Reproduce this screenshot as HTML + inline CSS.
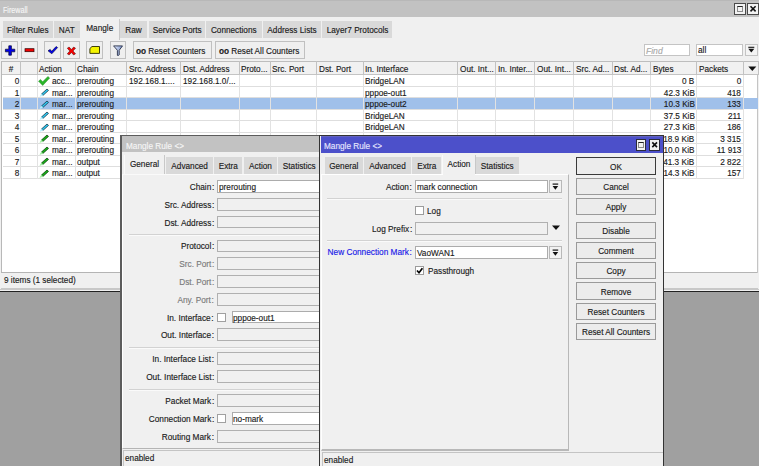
<!DOCTYPE html><html><head><meta charset="utf-8"><style>

*{box-sizing:border-box}
body{margin:0;width:759px;height:466px;overflow:hidden;background:#a0a0a0;position:relative;font-family:"Liberation Sans",sans-serif;font-size:9.5px;color:#1a1a1a}
.abs{position:absolute}
.t{position:absolute;white-space:nowrap;line-height:12px;height:12px;transform:scaleX(0.865);margin-top:0.9px;-webkit-text-stroke:0.15px currentColor}
.btn{position:absolute;border:1px solid #adadad;background:#ececec}
.fld{position:absolute;border:1px solid #acacac;background:#fff}
.dis{position:absolute;border:1px solid #b0b0b0;background:#f0f0f0}

</style></head><body>
<div class="abs" style="left:0px;top:0px;width:759px;height:292px;background:#f0f0f0"></div>
<div class="abs" style="left:0px;top:291px;width:759px;height:1px;background:#222"></div>
<div class="abs" style="left:0px;top:289px;width:759px;height:1px;background:#c8c8c8"></div>
<div class="abs" style="left:0px;top:0px;width:759px;height:17px;background:#c2c2c2"></div>
<div class="abs" style="left:0px;top:0px;width:759px;height:1px;background:#b8b8b8"></div>
<div class="t" style="left:3px;top:3.5px;transform-origin:0 50%;color:#f6f6f6;transform:scaleX(0.75)">Firewall</div>
<div class="abs" style="left:734.1px;top:3.1px;width:11.699999999999932px;height:11.6px;border:1px solid #4a4a4a;background:#f2f2f2"></div>
<div class="abs" style="left:747.2px;top:3.1px;width:11.799999999999955px;height:11.6px;border:1px solid #4a4a4a;background:#f2f2f2"></div>
<div class="abs" style="left:737px;top:5.8px;width:6.2999999999999545px;height:6.2px;border:1px solid #8a8a8a;border-top:1.6px solid #222"></div>
<svg class="abs" style="left:747.2px;top:3.1px" width="12" height="12"><path d="M3.5 3.3L8.6 8.4M8.6 3.3L3.5 8.4" stroke="#111" stroke-width="1.6"/></svg>
<div class="abs" style="left:3px;top:21.3px;width:49.5px;height:16.499999999999996px;background:#d9d9d9"></div>
<div class="t" style="left:3px;width:49.5px;top:22.8px;text-align:center;transform-origin:50% 50%;">Filter Rules</div>
<div class="abs" style="left:54px;top:21.3px;width:25.5px;height:16.499999999999996px;background:#d9d9d9"></div>
<div class="t" style="left:54px;width:25.5px;top:22.8px;text-align:center;transform-origin:50% 50%;">NAT</div>
<div class="abs" style="left:120px;top:21.3px;width:27px;height:16.499999999999996px;background:#d9d9d9"></div>
<div class="t" style="left:120px;width:27px;top:22.8px;text-align:center;transform-origin:50% 50%;">Raw</div>
<div class="abs" style="left:148.5px;top:21.3px;width:56.5px;height:16.499999999999996px;background:#d9d9d9"></div>
<div class="t" style="left:148.5px;width:56.5px;top:22.8px;text-align:center;transform-origin:50% 50%;">Service Ports</div>
<div class="abs" style="left:206px;top:21.3px;width:55.5px;height:16.499999999999996px;background:#d9d9d9"></div>
<div class="t" style="left:206px;width:55.5px;top:22.8px;text-align:center;transform-origin:50% 50%;">Connections</div>
<div class="abs" style="left:262.5px;top:21.3px;width:58.0px;height:16.499999999999996px;background:#d9d9d9"></div>
<div class="t" style="left:262.5px;width:58.0px;top:22.8px;text-align:center;transform-origin:50% 50%;">Address Lists</div>
<div class="abs" style="left:321.5px;top:21.3px;width:70.0px;height:16.499999999999996px;background:#d9d9d9"></div>
<div class="t" style="left:321.5px;width:70.0px;top:22.8px;text-align:center;transform-origin:50% 50%;">Layer7 Protocols</div>
<div class="abs" style="left:80px;top:19px;width:40px;height:21px;background:#f0f0f0;border-right:1px solid #c8c8c8"></div>
<div class="t" style="left:80px;width:39.5px;top:21.6px;text-align:center;transform-origin:50% 50%;">Mangle</div>
<div class="abs" style="left:1.3px;top:41.2px;width:17.099999999999998px;height:17.799999999999997px;border:1px solid #c0c0c0;background:#efefef"></div>
<div class="abs" style="left:20.9px;top:41.2px;width:16.700000000000003px;height:17.799999999999997px;border:1px solid #c0c0c0;background:#efefef"></div>
<div class="abs" style="left:44px;top:41.2px;width:16.9px;height:17.799999999999997px;border:1px solid #c0c0c0;background:#efefef"></div>
<div class="abs" style="left:63.2px;top:41.2px;width:16.39999999999999px;height:17.799999999999997px;border:1px solid #c0c0c0;background:#efefef"></div>
<div class="abs" style="left:86.3px;top:41.2px;width:17.200000000000003px;height:17.799999999999997px;border:1px solid #c0c0c0;background:#efefef"></div>
<div class="abs" style="left:109.7px;top:41.2px;width:16.599999999999994px;height:17.799999999999997px;border:1px solid #c0c0c0;background:#efefef"></div>
<div class="abs" style="left:133px;top:41.2px;width:78.80000000000001px;height:17.799999999999997px;border:1px solid #c0c0c0;background:#efefef"></div>
<div class="abs" style="left:215.1px;top:41.2px;width:89.9px;height:17.799999999999997px;border:1px solid #c0c0c0;background:#efefef"></div>
<svg class="abs" style="left:0;top:38px" width="130" height="24" viewBox="0 38 130 24">
<path d="M8.8 45.8h2.6v3.4h3.4v2.6h-3.4v3.4h-2.6v-3.4h-3.4v-2.6h3.4z" fill="#0000e8" stroke="#000030" stroke-width="0.7"/>
<rect x="25" y="48.7" width="9" height="3" fill="#f00000" stroke="#300000" stroke-width="0.7"/>
<path d="M48 50.8l2.2-1.4l1.5 1.9l4.4-4.8l1.5 1.1l-5.8 6.2z" fill="#0000f0" stroke="#000030" stroke-width="0.6"/>
<path d="M67.3 48.2l1.8-1.2l2.3 2.5l2.3-2.5l1.8 1.2l-2.5 2.8l2.5 2.8l-1.8 1.2l-2.3-2.5l-2.3 2.5l-1.8-1.2l2.5-2.8z" fill="#f80000" stroke="#400000" stroke-width="0.5"/>
<path d="M89.9 53.4v-4.9l2.1-2h7.5v6.9z" fill="#f4f400" stroke="#2a2a00" stroke-width="0.9" stroke-linejoin="round"/>
<defs><linearGradient id="fg" x1="0" y1="0" x2="1" y2="0"><stop offset="0" stop-color="#e8f0ff"/><stop offset="1" stop-color="#7890c8"/></linearGradient></defs><path d="M113.6 45.9h8.9l-3.3 4.4v4.6q-0.6 0.8-1.8 0.5v-5.1z" fill="url(#fg)" stroke="#283048" stroke-width="0.9" stroke-linejoin="round"/>
</svg>
<div class="t" style="left:136px;top:44px;transform-origin:0 50%;"><b>oo</b> Reset Counters</div>
<div class="t" style="left:218.5px;top:44px;transform-origin:0 50%;"><b>oo</b> Reset All Counters</div>
<div class="abs" style="left:644px;top:43.8px;width:46px;height:12.600000000000001px;border:1px solid #c4c4c4;background:#fff"></div>
<div class="t" style="left:646.3px;top:44px;transform-origin:0 50%;color:#a8a8a8;font-style:italic;transform:scaleX(0.9)">Find</div>
<div class="abs" style="left:695.6px;top:43.8px;width:47.39999999999998px;height:12.600000000000001px;border:1px solid #c4c4c4;background:#fff"></div>
<div class="t" style="left:697.5px;top:43.5px;transform-origin:0 50%;">all</div>
<div class="abs" style="left:744.8px;top:43.8px;width:13.200000000000045px;height:12.600000000000001px;border:1px solid #c4c4c4;background:#f4f4f4"></div>
<svg class="abs" style="left:745px;top:44px" width="13" height="12"><path d="M3.3 3.3h6" stroke="#111" stroke-width="1.1"/><path d="M3.3 4.8h6l-3 3.6z" fill="#111"/></svg>
<div class="abs" style="left:1px;top:61px;width:757px;height:211.5px;background:#fff"></div>
<div class="abs" style="left:1.2px;top:61px;width:1.3px;height:211.5px;background:#b8b8b8"></div>
<div class="abs" style="left:1px;top:272px;width:757px;height:1px;background:#b4b4b4"></div>
<div class="abs" style="left:757.3px;top:61px;width:1.0px;height:212px;background:#c4c4c4"></div>
<div class="abs" style="left:2px;top:61px;width:756px;height:13.5px;background:#f1f1f1;border-top:1px solid #bdbdbd;border-bottom:1px solid #c4c4c4"></div>
<div class="abs" style="left:19.5px;top:61px;width:1.0px;height:13.5px;background:#c2c2c2"></div>
<div class="t" style="left:2px;width:18px;top:62px;text-align:center;transform-origin:50% 50%;">#</div>
<div class="abs" style="left:36.5px;top:61px;width:1.0px;height:13.5px;background:#c2c2c2"></div>
<div class="abs" style="left:74.5px;top:61px;width:1.0px;height:13.5px;background:#c2c2c2"></div>
<div class="t" style="left:39px;top:62px;transform-origin:0 50%;">Action</div>
<div class="abs" style="left:126.0px;top:61px;width:1.0px;height:13.5px;background:#c2c2c2"></div>
<div class="t" style="left:77px;top:62px;transform-origin:0 50%;">Chain</div>
<div class="abs" style="left:180.0px;top:61px;width:1.0px;height:13.5px;background:#c2c2c2"></div>
<div class="t" style="left:128.5px;top:62px;transform-origin:0 50%;">Src. Address</div>
<div class="abs" style="left:238.5px;top:61px;width:1.0px;height:13.5px;background:#c2c2c2"></div>
<div class="t" style="left:182.5px;top:62px;transform-origin:0 50%;">Dst. Address</div>
<div class="abs" style="left:269.5px;top:61px;width:1.0px;height:13.5px;background:#c2c2c2"></div>
<div class="t" style="left:241px;top:62px;transform-origin:0 50%;">Proto...</div>
<div class="abs" style="left:316.0px;top:61px;width:1.0px;height:13.5px;background:#c2c2c2"></div>
<div class="t" style="left:272px;top:62px;transform-origin:0 50%;">Src. Port</div>
<div class="abs" style="left:362.5px;top:61px;width:1.0px;height:13.5px;background:#c2c2c2"></div>
<div class="t" style="left:318.5px;top:62px;transform-origin:0 50%;">Dst. Port</div>
<div class="abs" style="left:457.0px;top:61px;width:1.0px;height:13.5px;background:#c2c2c2"></div>
<div class="t" style="left:365px;top:62px;transform-origin:0 50%;">In. Interface</div>
<div class="abs" style="left:495.0px;top:61px;width:1.0px;height:13.5px;background:#c2c2c2"></div>
<div class="t" style="left:459.5px;top:62px;transform-origin:0 50%;">Out. Int...</div>
<div class="abs" style="left:534.0px;top:61px;width:1.0px;height:13.5px;background:#c2c2c2"></div>
<div class="t" style="left:497.5px;top:62px;transform-origin:0 50%;">In. Inter...</div>
<div class="abs" style="left:573.0px;top:61px;width:1.0px;height:13.5px;background:#c2c2c2"></div>
<div class="t" style="left:536.5px;top:62px;transform-origin:0 50%;">Out. Int...</div>
<div class="abs" style="left:611.5px;top:61px;width:1.0px;height:13.5px;background:#c2c2c2"></div>
<div class="t" style="left:575.5px;top:62px;transform-origin:0 50%;">Src. Ad...</div>
<div class="abs" style="left:650.0px;top:61px;width:1.0px;height:13.5px;background:#c2c2c2"></div>
<div class="t" style="left:614px;top:62px;transform-origin:0 50%;">Dst. Ad...</div>
<div class="abs" style="left:696.0px;top:61px;width:1.0px;height:13.5px;background:#c2c2c2"></div>
<div class="t" style="left:652.5px;top:62px;transform-origin:0 50%;">Bytes</div>
<div class="abs" style="left:743.0px;top:61px;width:1.0px;height:13.5px;background:#c2c2c2"></div>
<div class="t" style="left:698.5px;top:62px;transform-origin:0 50%;">Packets</div>
<div class="abs" style="left:757.5px;top:61px;width:1.0px;height:13.5px;background:#c2c2c2"></div>
<svg class="abs" style="left:744px;top:64px" width="14" height="10"><path d="M4.3 2.5h8l-4 4.5z" fill="#111"/></svg>
<div class="abs" style="left:2.5px;top:85.56px;width:741.0px;height:1.0px;background:#dedede"></div>
<div class="t" style="right:740.2px;top:74.1px;text-align:right;transform-origin:100% 50%;">0</div>
<div class="t" style="left:51.5px;top:74.1px;transform-origin:0 50%;">acc...</div>
<div class="t" style="left:77px;top:74.1px;transform-origin:0 50%;">prerouting</div>
<div class="t" style="left:128.5px;top:74.1px;transform-origin:0 50%;">192.168.1....</div>
<div class="t" style="left:182.5px;top:74.1px;transform-origin:0 50%;">192.168.1.0/...</div>
<div class="t" style="left:365px;top:74.1px;transform-origin:0 50%;">BridgeLAN</div>
<div class="t" style="right:64.5px;top:74.1px;text-align:right;transform-origin:100% 50%;">0 B</div>
<div class="t" style="right:18px;top:74.1px;text-align:right;transform-origin:100% 50%;">0</div>
<svg class="abs" style="left:38px;top:76.0px" width="12" height="10" viewBox="0 0 12 10"><path d="M0.5 5.2l2-1.8l2.2 2.3l5.2-5.3l1.8 1.7l-7 7.4z" fill="#2ab52a" stroke="#1a801a" stroke-width="0.4"/></svg>
<div class="abs" style="left:2.5px;top:97.12px;width:741.0px;height:1.0px;background:#dedede"></div>
<div class="t" style="right:740.2px;top:85.66px;text-align:right;transform-origin:100% 50%;">1</div>
<div class="t" style="left:51.5px;top:85.66px;transform-origin:0 50%;">mar...</div>
<div class="t" style="left:77px;top:85.66px;transform-origin:0 50%;">prerouting</div>
<div class="t" style="left:128.5px;top:85.66px;transform-origin:0 50%;"></div>
<div class="t" style="left:182.5px;top:85.66px;transform-origin:0 50%;"></div>
<div class="t" style="left:365px;top:85.66px;transform-origin:0 50%;">pppoe-out1</div>
<div class="t" style="right:64.5px;top:85.66px;text-align:right;transform-origin:100% 50%;">42.3 KiB</div>
<div class="t" style="right:18px;top:85.66px;text-align:right;transform-origin:100% 50%;">418</div>
<svg class="abs" style="left:38.5px;top:88.06px" width="11" height="9" viewBox="0 0 11 9"><path d="M2.4 6.1l5.6-5.1l1.5 1.4l-5.6 5.1z" fill="#30c8f0" stroke="#0a2030" stroke-width="0.7" stroke-linejoin="round"/><path d="M0.9 8.4l1.5-2.3l1.5 1.4z" fill="#b8f0ff" stroke="#b8f0ff" stroke-width="0.5"/></svg>
<div class="abs" style="left:2.5px;top:97.62px;width:755.5px;height:11.560000000000002px;background:#a0c0ea"></div>
<div class="abs" style="left:2.5px;top:108.68px;width:741.0px;height:1.0px;background:#dedede"></div>
<div class="t" style="right:740.2px;top:97.22px;text-align:right;transform-origin:100% 50%;">2</div>
<div class="t" style="left:51.5px;top:97.22px;transform-origin:0 50%;">mar...</div>
<div class="t" style="left:77px;top:97.22px;transform-origin:0 50%;">prerouting</div>
<div class="t" style="left:128.5px;top:97.22px;transform-origin:0 50%;"></div>
<div class="t" style="left:182.5px;top:97.22px;transform-origin:0 50%;"></div>
<div class="t" style="left:365px;top:97.22px;transform-origin:0 50%;">pppoe-out2</div>
<div class="t" style="right:64.5px;top:97.22px;text-align:right;transform-origin:100% 50%;">10.3 KiB</div>
<div class="t" style="right:18px;top:97.22px;text-align:right;transform-origin:100% 50%;">133</div>
<svg class="abs" style="left:38.5px;top:99.62px" width="11" height="9" viewBox="0 0 11 9"><path d="M2.4 6.1l5.6-5.1l1.5 1.4l-5.6 5.1z" fill="#30c8f0" stroke="#0a2030" stroke-width="0.7" stroke-linejoin="round"/><path d="M0.9 8.4l1.5-2.3l1.5 1.4z" fill="#b8f0ff" stroke="#b8f0ff" stroke-width="0.5"/></svg>
<div class="abs" style="left:2.5px;top:120.24000000000001px;width:741.0px;height:1.0px;background:#dedede"></div>
<div class="t" style="right:740.2px;top:108.78px;text-align:right;transform-origin:100% 50%;">3</div>
<div class="t" style="left:51.5px;top:108.78px;transform-origin:0 50%;">mar...</div>
<div class="t" style="left:77px;top:108.78px;transform-origin:0 50%;">prerouting</div>
<div class="t" style="left:128.5px;top:108.78px;transform-origin:0 50%;"></div>
<div class="t" style="left:182.5px;top:108.78px;transform-origin:0 50%;"></div>
<div class="t" style="left:365px;top:108.78px;transform-origin:0 50%;">BridgeLAN</div>
<div class="t" style="right:64.5px;top:108.78px;text-align:right;transform-origin:100% 50%;">37.5 KiB</div>
<div class="t" style="right:18px;top:108.78px;text-align:right;transform-origin:100% 50%;">211</div>
<svg class="abs" style="left:38.5px;top:111.18px" width="11" height="9" viewBox="0 0 11 9"><path d="M2.4 6.1l5.6-5.1l1.5 1.4l-5.6 5.1z" fill="#30c8f0" stroke="#0a2030" stroke-width="0.7" stroke-linejoin="round"/><path d="M0.9 8.4l1.5-2.3l1.5 1.4z" fill="#b8f0ff" stroke="#b8f0ff" stroke-width="0.5"/></svg>
<div class="abs" style="left:2.5px;top:131.8px;width:741.0px;height:1.0px;background:#dedede"></div>
<div class="t" style="right:740.2px;top:120.34px;text-align:right;transform-origin:100% 50%;">4</div>
<div class="t" style="left:51.5px;top:120.34px;transform-origin:0 50%;">mar...</div>
<div class="t" style="left:77px;top:120.34px;transform-origin:0 50%;">prerouting</div>
<div class="t" style="left:128.5px;top:120.34px;transform-origin:0 50%;"></div>
<div class="t" style="left:182.5px;top:120.34px;transform-origin:0 50%;"></div>
<div class="t" style="left:365px;top:120.34px;transform-origin:0 50%;">BridgeLAN</div>
<div class="t" style="right:64.5px;top:120.34px;text-align:right;transform-origin:100% 50%;">27.3 KiB</div>
<div class="t" style="right:18px;top:120.34px;text-align:right;transform-origin:100% 50%;">186</div>
<svg class="abs" style="left:38.5px;top:122.74000000000001px" width="11" height="9" viewBox="0 0 11 9"><path d="M2.4 6.1l5.6-5.1l1.5 1.4l-5.6 5.1z" fill="#30c8f0" stroke="#0a2030" stroke-width="0.7" stroke-linejoin="round"/><path d="M0.9 8.4l1.5-2.3l1.5 1.4z" fill="#b8f0ff" stroke="#b8f0ff" stroke-width="0.5"/></svg>
<div class="abs" style="left:2.5px;top:143.36px;width:741.0px;height:1.0px;background:#dedede"></div>
<div class="t" style="right:740.2px;top:131.9px;text-align:right;transform-origin:100% 50%;">5</div>
<div class="t" style="left:51.5px;top:131.9px;transform-origin:0 50%;">mar...</div>
<div class="t" style="left:77px;top:131.9px;transform-origin:0 50%;">prerouting</div>
<div class="t" style="left:128.5px;top:131.9px;transform-origin:0 50%;"></div>
<div class="t" style="left:182.5px;top:131.9px;transform-origin:0 50%;"></div>
<div class="t" style="left:365px;top:131.9px;transform-origin:0 50%;">BridgeLAN</div>
<div class="t" style="right:64.5px;top:131.9px;text-align:right;transform-origin:100% 50%;">418.9 KiB</div>
<div class="t" style="right:18px;top:131.9px;text-align:right;transform-origin:100% 50%;">3 315</div>
<svg class="abs" style="left:38.5px;top:134.3px" width="11" height="9" viewBox="0 0 11 9"><path d="M2.4 6.1l5.6-5.1l1.5 1.4l-5.6 5.1z" fill="#18b018" stroke="#003000" stroke-width="0.7" stroke-linejoin="round"/><path d="M0.9 8.4l1.5-2.3l1.5 1.4z" fill="#a0f0a0" stroke="#a0f0a0" stroke-width="0.5"/></svg>
<div class="abs" style="left:2.5px;top:154.92000000000002px;width:741.0px;height:1.0px;background:#dedede"></div>
<div class="t" style="right:740.2px;top:143.46px;text-align:right;transform-origin:100% 50%;">6</div>
<div class="t" style="left:51.5px;top:143.46px;transform-origin:0 50%;">mar...</div>
<div class="t" style="left:77px;top:143.46px;transform-origin:0 50%;">prerouting</div>
<div class="t" style="left:128.5px;top:143.46px;transform-origin:0 50%;"></div>
<div class="t" style="left:182.5px;top:143.46px;transform-origin:0 50%;"></div>
<div class="t" style="left:365px;top:143.46px;transform-origin:0 50%;"></div>
<div class="t" style="right:64.5px;top:143.46px;text-align:right;transform-origin:100% 50%;">110.0 KiB</div>
<div class="t" style="right:18px;top:143.46px;text-align:right;transform-origin:100% 50%;">11 913</div>
<svg class="abs" style="left:38.5px;top:145.86px" width="11" height="9" viewBox="0 0 11 9"><path d="M2.4 6.1l5.6-5.1l1.5 1.4l-5.6 5.1z" fill="#18b018" stroke="#003000" stroke-width="0.7" stroke-linejoin="round"/><path d="M0.9 8.4l1.5-2.3l1.5 1.4z" fill="#a0f0a0" stroke="#a0f0a0" stroke-width="0.5"/></svg>
<div class="abs" style="left:2.5px;top:166.48000000000002px;width:741.0px;height:1.0px;background:#dedede"></div>
<div class="t" style="right:740.2px;top:155.02px;text-align:right;transform-origin:100% 50%;">7</div>
<div class="t" style="left:51.5px;top:155.02px;transform-origin:0 50%;">mar...</div>
<div class="t" style="left:77px;top:155.02px;transform-origin:0 50%;">output</div>
<div class="t" style="left:128.5px;top:155.02px;transform-origin:0 50%;"></div>
<div class="t" style="left:182.5px;top:155.02px;transform-origin:0 50%;"></div>
<div class="t" style="left:365px;top:155.02px;transform-origin:0 50%;"></div>
<div class="t" style="right:64.5px;top:155.02px;text-align:right;transform-origin:100% 50%;">141.3 KiB</div>
<div class="t" style="right:18px;top:155.02px;text-align:right;transform-origin:100% 50%;">2 822</div>
<svg class="abs" style="left:38.5px;top:157.42000000000002px" width="11" height="9" viewBox="0 0 11 9"><path d="M2.4 6.1l5.6-5.1l1.5 1.4l-5.6 5.1z" fill="#18b018" stroke="#003000" stroke-width="0.7" stroke-linejoin="round"/><path d="M0.9 8.4l1.5-2.3l1.5 1.4z" fill="#a0f0a0" stroke="#a0f0a0" stroke-width="0.5"/></svg>
<div class="abs" style="left:2.5px;top:178.04000000000002px;width:741.0px;height:1.0px;background:#dedede"></div>
<div class="t" style="right:740.2px;top:166.58px;text-align:right;transform-origin:100% 50%;">8</div>
<div class="t" style="left:51.5px;top:166.58px;transform-origin:0 50%;">mar...</div>
<div class="t" style="left:77px;top:166.58px;transform-origin:0 50%;">output</div>
<div class="t" style="left:128.5px;top:166.58px;transform-origin:0 50%;"></div>
<div class="t" style="left:182.5px;top:166.58px;transform-origin:0 50%;"></div>
<div class="t" style="left:365px;top:166.58px;transform-origin:0 50%;"></div>
<div class="t" style="right:64.5px;top:166.58px;text-align:right;transform-origin:100% 50%;">114.3 KiB</div>
<div class="t" style="right:18px;top:166.58px;text-align:right;transform-origin:100% 50%;">157</div>
<svg class="abs" style="left:38.5px;top:168.98000000000002px" width="11" height="9" viewBox="0 0 11 9"><path d="M2.4 6.1l5.6-5.1l1.5 1.4l-5.6 5.1z" fill="#18b018" stroke="#003000" stroke-width="0.7" stroke-linejoin="round"/><path d="M0.9 8.4l1.5-2.3l1.5 1.4z" fill="#a0f0a0" stroke="#a0f0a0" stroke-width="0.5"/></svg>
<div class="abs" style="left:19.5px;top:74.5px;width:1.0px;height:104.04000000000002px;background:#e2e2e2"></div>
<div class="abs" style="left:36.5px;top:74.5px;width:1.0px;height:104.04000000000002px;background:#e2e2e2"></div>
<div class="abs" style="left:74.5px;top:74.5px;width:1.0px;height:104.04000000000002px;background:#e2e2e2"></div>
<div class="abs" style="left:126.0px;top:74.5px;width:1.0px;height:104.04000000000002px;background:#e2e2e2"></div>
<div class="abs" style="left:180.0px;top:74.5px;width:1.0px;height:104.04000000000002px;background:#e2e2e2"></div>
<div class="abs" style="left:238.5px;top:74.5px;width:1.0px;height:104.04000000000002px;background:#e2e2e2"></div>
<div class="abs" style="left:269.5px;top:74.5px;width:1.0px;height:104.04000000000002px;background:#e2e2e2"></div>
<div class="abs" style="left:316.0px;top:74.5px;width:1.0px;height:104.04000000000002px;background:#e2e2e2"></div>
<div class="abs" style="left:362.5px;top:74.5px;width:1.0px;height:104.04000000000002px;background:#e2e2e2"></div>
<div class="abs" style="left:457.0px;top:74.5px;width:1.0px;height:104.04000000000002px;background:#e2e2e2"></div>
<div class="abs" style="left:495.0px;top:74.5px;width:1.0px;height:104.04000000000002px;background:#e2e2e2"></div>
<div class="abs" style="left:534.0px;top:74.5px;width:1.0px;height:104.04000000000002px;background:#e2e2e2"></div>
<div class="abs" style="left:573.0px;top:74.5px;width:1.0px;height:104.04000000000002px;background:#e2e2e2"></div>
<div class="abs" style="left:611.5px;top:74.5px;width:1.0px;height:104.04000000000002px;background:#e2e2e2"></div>
<div class="abs" style="left:650.0px;top:74.5px;width:1.0px;height:104.04000000000002px;background:#e2e2e2"></div>
<div class="abs" style="left:696.0px;top:74.5px;width:1.0px;height:104.04000000000002px;background:#e2e2e2"></div>
<div class="abs" style="left:743.0px;top:74.5px;width:1.0px;height:104.04000000000002px;background:#e2e2e2"></div>
<div class="abs" style="left:1px;top:273px;width:757px;height:15px;background:#f0f0f0"></div>
<div class="abs" style="left:1px;top:288px;width:757px;height:1px;background:#c8c8c8"></div>
<div class="t" style="left:4px;top:273px;transform-origin:0 50%;">9 items (1 selected)</div>
<div class="abs" style="left:120px;top:135.3px;width:210px;height:330.7px;background:#f0f0f0;border-left:2px solid #5c5c5c;border-top:1px solid #5c5c5c"></div>
<div class="abs" style="left:122px;top:136.3px;width:208px;height:16.19999999999999px;background:#c2c2c2"></div>
<div class="t" style="left:126px;top:139px;transform-origin:0 50%;color:#f6f6f6">Mangle Rule &lt;&gt;</div>
<div class="abs" style="left:165.5px;top:157px;width:47.30000000000001px;height:17px;background:#d9d9d9"></div>
<div class="t" style="left:165.5px;width:47.30000000000001px;top:159.0px;text-align:center;transform-origin:50% 50%;">Advanced</div>
<div class="abs" style="left:213.8px;top:157px;width:28.69999999999999px;height:17px;background:#d9d9d9"></div>
<div class="t" style="left:213.8px;width:28.69999999999999px;top:159.0px;text-align:center;transform-origin:50% 50%;">Extra</div>
<div class="abs" style="left:243.5px;top:157px;width:33.0px;height:17px;background:#d9d9d9"></div>
<div class="t" style="left:243.5px;width:33.0px;top:159.0px;text-align:center;transform-origin:50% 50%;">Action</div>
<div class="abs" style="left:277.5px;top:157px;width:42.5px;height:17px;background:#d9d9d9"></div>
<div class="t" style="left:277.5px;width:42.5px;top:159.0px;text-align:center;transform-origin:50% 50%;">Statistics</div>
<div class="abs" style="left:123.5px;top:155px;width:41.5px;height:20px;background:#f0f0f0;border-right:1px solid #c8c8c8;border-left:1px solid #fafafa"></div>
<div class="t" style="left:124px;width:41px;top:157.3px;text-align:center;transform-origin:50% 50%;">General</div>
<div class="abs" style="left:122.3px;top:174px;width:217.7px;height:275px;border-left:1px solid #fff;border-top:1px solid #fafafa;border-bottom:1.6px solid #b4b4b4"></div>
<div class="t" style="right:545px;top:180.1px;text-align:right;transform-origin:100% 50%;color:#1a1a1a;transform:scaleX(0.87)">Chain<span style="margin-left:0.8px">:</span></div>
<div class="fld" style="left:217px;top:180.1px;width:120px;height:12.7px"></div>
<div class="t" style="left:219px;top:180.1px;transform-origin:0 50%;">prerouting</div>
<div class="t" style="right:545px;top:198.1px;text-align:right;transform-origin:100% 50%;color:#1a1a1a;transform:scaleX(0.87)">Src. Address<span style="margin-left:0.8px">:</span></div>
<div class="dis" style="left:217px;top:198.1px;width:120px;height:12.7px"></div>
<div class="t" style="right:545px;top:215.8px;text-align:right;transform-origin:100% 50%;color:#1a1a1a;transform:scaleX(0.87)">Dst. Address<span style="margin-left:0.8px">:</span></div>
<div class="dis" style="left:217px;top:215.8px;width:120px;height:12.7px"></div>
<div class="abs" style="left:129px;top:234px;width:201px;height:2px;border-top:1px solid #d2d2d2;border-bottom:1px solid #fafafa"></div>
<div class="t" style="right:545px;top:239.5px;text-align:right;transform-origin:100% 50%;color:#1a1a1a;transform:scaleX(0.87)">Protocol<span style="margin-left:0.8px">:</span></div>
<div class="dis" style="left:217px;top:239.5px;width:120px;height:12.7px"></div>
<div class="t" style="right:545px;top:257.4px;text-align:right;transform-origin:100% 50%;color:#7a7a7a;transform:scaleX(0.87)">Src. Port<span style="margin-left:0.8px">:</span></div>
<div class="dis" style="left:217px;top:257.4px;width:120px;height:12.7px"></div>
<div class="t" style="right:545px;top:275.4px;text-align:right;transform-origin:100% 50%;color:#7a7a7a;transform:scaleX(0.87)">Dst. Port<span style="margin-left:0.8px">:</span></div>
<div class="dis" style="left:217px;top:275.4px;width:120px;height:12.7px"></div>
<div class="t" style="right:545px;top:293.4px;text-align:right;transform-origin:100% 50%;color:#7a7a7a;transform:scaleX(0.87)">Any. Port<span style="margin-left:0.8px">:</span></div>
<div class="dis" style="left:217px;top:293.4px;width:120px;height:12.7px"></div>
<div class="t" style="right:545px;top:310.7px;text-align:right;transform-origin:100% 50%;color:#1a1a1a;transform:scaleX(0.87)">In. Interface<span style="margin-left:0.8px">:</span></div>
<div class="fld" style="left:217.2px;top:313.2px;width:9px;height:8.8px;border-color:#a0a0a0"></div>
<div class="fld" style="left:231.8px;top:310.7px;width:100px;height:12.7px"></div>
<div class="t" style="left:233px;top:310.7px;transform-origin:0 50%;">pppoe-out1</div>
<div class="t" style="right:545px;top:328.2px;text-align:right;transform-origin:100% 50%;color:#1a1a1a;transform:scaleX(0.87)">Out. Interface<span style="margin-left:0.8px">:</span></div>
<div class="dis" style="left:217px;top:328.2px;width:120px;height:12.7px"></div>
<div class="abs" style="left:129px;top:347px;width:201px;height:2px;border-top:1px solid #d2d2d2;border-bottom:1px solid #fafafa"></div>
<div class="t" style="right:545px;top:352.4px;text-align:right;transform-origin:100% 50%;color:#1a1a1a;transform:scaleX(0.87)">In. Interface List<span style="margin-left:0.8px">:</span></div>
<div class="dis" style="left:217px;top:352.4px;width:120px;height:12.7px"></div>
<div class="t" style="right:545px;top:370.3px;text-align:right;transform-origin:100% 50%;color:#1a1a1a;transform:scaleX(0.87)">Out. Interface List<span style="margin-left:0.8px">:</span></div>
<div class="dis" style="left:217px;top:370.3px;width:120px;height:12.7px"></div>
<div class="abs" style="left:129px;top:388.6px;width:201px;height:2.0px;border-top:1px solid #d2d2d2;border-bottom:1px solid #fafafa"></div>
<div class="t" style="right:545px;top:394.1px;text-align:right;transform-origin:100% 50%;color:#1a1a1a;transform:scaleX(0.87)">Packet Mark<span style="margin-left:0.8px">:</span></div>
<div class="dis" style="left:217px;top:394.1px;width:120px;height:12.7px"></div>
<div class="t" style="right:545px;top:411.9px;text-align:right;transform-origin:100% 50%;color:#1a1a1a;transform:scaleX(0.87)">Connection Mark<span style="margin-left:0.8px">:</span></div>
<div class="fld" style="left:217.2px;top:414.4px;width:9px;height:8.8px;border-color:#a0a0a0"></div>
<div class="fld" style="left:231.8px;top:411.9px;width:100px;height:12.7px"></div>
<div class="t" style="left:233px;top:411.9px;transform-origin:0 50%;">no-mark</div>
<div class="t" style="right:545px;top:429.9px;text-align:right;transform-origin:100% 50%;color:#1a1a1a;transform:scaleX(0.87)">Routing Mark<span style="margin-left:0.8px">:</span></div>
<div class="dis" style="left:217px;top:429.9px;width:120px;height:12.7px"></div>
<div class="abs" style="left:122.8px;top:450.1px;width:207.2px;height:15.899999999999977px;border-left:1px solid #c4c4c4;border-top:1px solid #c4c4c4"></div>
<div class="t" style="left:125px;top:451.6px;transform-origin:0 50%;">enabled</div>
<div class="abs" style="left:319px;top:135.3px;width:345px;height:330.7px;background:#f0f0f0;border-left:1.5px solid #333;border-right:1.5px solid #333;border-top:1px solid #333"></div>
<div class="abs" style="left:320.5px;top:136.3px;width:342.0px;height:16.399999999999977px;background:#4c50ca"></div>
<div class="t" style="left:324px;top:139px;transform-origin:0 50%;color:#e6e6ff">Mangle Rule &lt;&gt;</div>
<div class="abs" style="left:635.6px;top:139.4px;width:10.799999999999955px;height:11.199999999999989px;border:1px solid #2a2a3a;background:#f2f2f2"></div>
<div class="abs" style="left:648.6px;top:139.4px;width:11.199999999999932px;height:11.199999999999989px;border:1px solid #2a2a3a;background:#f2f2f2"></div>
<div class="abs" style="left:638.2px;top:141.8px;width:5.7999999999999545px;height:6.199999999999989px;border:1px solid #8a8a8a;border-top:1.6px solid #222"></div>
<svg class="abs" style="left:648.6px;top:139.4px" width="12" height="12"><path d="M3.3 3.4L8 8.1M8 3.4L3.3 8.1" stroke="#111" stroke-width="1.6"/></svg>
<div class="abs" style="left:320.5px;top:136.3px;width:342.0px;height:1.0px;background:#6464c0"></div>
<div class="abs" style="left:325px;top:156.6px;width:37.5px;height:17.099999999999994px;background:#d9d9d9"></div>
<div class="t" style="left:325px;width:37.5px;top:159.3px;text-align:center;transform-origin:50% 50%;">General</div>
<div class="abs" style="left:363.5px;top:156.6px;width:47.0px;height:17.099999999999994px;background:#d9d9d9"></div>
<div class="t" style="left:363.5px;width:47.0px;top:159.3px;text-align:center;transform-origin:50% 50%;">Advanced</div>
<div class="abs" style="left:411.5px;top:156.6px;width:29.69999999999999px;height:17.099999999999994px;background:#d9d9d9"></div>
<div class="t" style="left:411.5px;width:29.69999999999999px;top:159.3px;text-align:center;transform-origin:50% 50%;">Extra</div>
<div class="abs" style="left:476px;top:156.6px;width:42.5px;height:17.099999999999994px;background:#d9d9d9"></div>
<div class="t" style="left:476px;width:42.5px;top:159.3px;text-align:center;transform-origin:50% 50%;">Statistics</div>
<div class="abs" style="left:441.5px;top:154.8px;width:34.10000000000002px;height:20.19999999999999px;background:#f0f0f0;border-right:1px solid #c8c8c8;border-left:1px solid #fafafa"></div>
<div class="t" style="left:441.5px;width:34.0px;top:157.3px;text-align:center;transform-origin:50% 50%;">Action</div>
<div class="abs" style="left:321px;top:174px;width:247.5px;height:277.2px;border:1px solid #fff;border-bottom:2px solid #b8b8b8;border-right:1.6px solid #b8b8b8"></div>
<div class="abs" style="left:442.5px;top:173px;width:32.0px;height:2px;background:#f0f0f0"></div>
<div class="t" style="right:347px;top:180.4px;text-align:right;transform-origin:100% 50%;transform:scaleX(0.87)">Action<span style="margin-left:0.8px">:</span></div>
<div class="fld" style="left:415.1px;top:180.3px;width:133px;height:12.8px"></div>
<div class="t" style="left:417.3px;top:180.4px;transform-origin:0 50%;">mark connection</div>
<div class="abs" style="left:548.9px;top:180.2px;width:12.7px;height:13.2px;border:1px solid #b8b8b8;background:#f2f2f2"></div>
<svg class="abs" style="left:548.9px;top:180.2px" width="13" height="13"><path d="M3.6 4.1h5.6" stroke="#111" stroke-width="1.2"/><path d="M3.6 6h5.6l-2.8 3.8z" fill="#111"/></svg>
<div class="abs" style="left:327px;top:198.3px;width:235px;height:2.0px;border-top:1px solid #d2d2d2;border-bottom:1px solid #fafafa"></div>
<div class="fld" style="left:415.1px;top:206px;width:9.2px;height:9.2px;border-color:#9c9c9c"></div>
<div class="t" style="left:427px;top:204.5px;transform-origin:0 50%;">Log</div>
<div class="t" style="right:347px;top:221.8px;text-align:right;transform-origin:100% 50%;transform:scaleX(0.87)">Log Prefix<span style="margin-left:0.8px">:</span></div>
<div class="dis" style="left:415.1px;top:221.8px;width:132.6px;height:12.8px"></div>
<svg class="abs" style="left:550px;top:223px" width="12" height="10"><path d="M2 2.6h8l-4 4.4z" fill="#111"/></svg>
<div class="abs" style="left:327px;top:239.8px;width:235px;height:2.0px;border-top:1px solid #d2d2d2;border-bottom:1px solid #fafafa"></div>
<div class="t" style="right:347px;top:245.6px;text-align:right;transform-origin:100% 50%;color:#1818e8;transform:scaleX(0.87)">New Connection Mark<span style="margin-left:0.8px">:</span></div>
<div class="fld" style="left:415.1px;top:245.9px;width:133px;height:12.7px"></div>
<div class="t" style="left:417.3px;top:246px;transform-origin:0 50%;">VaoWAN1</div>
<div class="abs" style="left:548.9px;top:245.7px;width:12.7px;height:13.2px;border:1px solid #b8b8b8;background:#f2f2f2"></div>
<svg class="abs" style="left:548.9px;top:245.7px" width="13" height="13"><path d="M3.6 4.1h5.6" stroke="#111" stroke-width="1.2"/><path d="M3.6 6h5.6l-2.8 3.8z" fill="#111"/></svg>
<div class="fld" style="left:415.1px;top:265.8px;width:9.2px;height:9px;border-color:#9c9c9c"></div>
<svg class="abs" style="left:415.1px;top:265.8px" width="9" height="9"><path d="M2 4.5l2 2.2l3.4-4.4" stroke="#000" stroke-width="1.7" fill="none"/></svg>
<div class="t" style="left:427.5px;top:264.2px;transform-origin:0 50%;">Passthrough</div>
<div class="abs" style="left:576px;top:157.2px;width:80px;height:18.30000000000001px;border:1.5px solid #3a3a3a;background:#ececec"></div>
<div class="t" style="left:576px;width:80px;top:159.95px;text-align:center;transform-origin:50% 50%;">OK</div>
<div class="abs" style="left:576px;top:178.2px;width:80px;height:17.200000000000017px;border:1px solid #9a9a9a;background:#ececec"></div>
<div class="t" style="left:576px;width:80px;top:180.4px;text-align:center;transform-origin:50% 50%;">Cancel</div>
<div class="abs" style="left:576px;top:198.3px;width:80px;height:17.19999999999999px;border:1px solid #9a9a9a;background:#ececec"></div>
<div class="t" style="left:576px;width:80px;top:200.5px;text-align:center;transform-origin:50% 50%;">Apply</div>
<div class="abs" style="left:576px;top:221.8px;width:80px;height:17.299999999999983px;border:1px solid #9a9a9a;background:#ececec"></div>
<div class="t" style="left:576px;width:80px;top:224.04999999999998px;text-align:center;transform-origin:50% 50%;">Disable</div>
<div class="abs" style="left:576px;top:242px;width:80px;height:17.30000000000001px;border:1px solid #9a9a9a;background:#ececec"></div>
<div class="t" style="left:576px;width:80px;top:244.25px;text-align:center;transform-origin:50% 50%;">Comment</div>
<div class="abs" style="left:576px;top:262.2px;width:80px;height:17.30000000000001px;border:1px solid #9a9a9a;background:#ececec"></div>
<div class="t" style="left:576px;width:80px;top:264.45000000000005px;text-align:center;transform-origin:50% 50%;">Copy</div>
<div class="abs" style="left:576px;top:282.4px;width:80px;height:17.30000000000001px;border:1px solid #9a9a9a;background:#ececec"></div>
<div class="t" style="left:576px;width:80px;top:284.65px;text-align:center;transform-origin:50% 50%;">Remove</div>
<div class="abs" style="left:576px;top:302.6px;width:80px;height:17.299999999999955px;border:1px solid #9a9a9a;background:#ececec"></div>
<div class="t" style="left:576px;width:80px;top:304.85px;text-align:center;transform-origin:50% 50%;">Reset Counters</div>
<div class="abs" style="left:576px;top:322.8px;width:80px;height:17.30000000000001px;border:1px solid #9a9a9a;background:#ececec"></div>
<div class="t" style="left:576px;width:80px;top:325.05000000000007px;text-align:center;transform-origin:50% 50%;">Reset All Counters</div>
<div class="abs" style="left:321.5px;top:452px;width:341.0px;height:14px;border-left:1px solid #c4c4c4;border-top:1px solid #c4c4c4"></div>
<div class="t" style="left:324px;top:453.5px;transform-origin:0 50%;">enabled</div>
</body></html>
